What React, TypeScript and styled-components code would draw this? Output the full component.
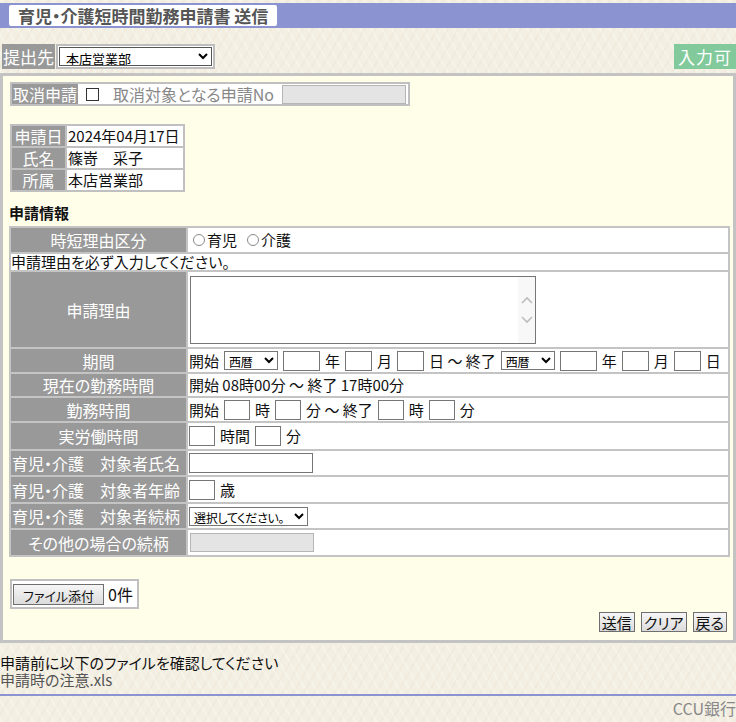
import styled, { createGlobalStyle } from 'styled-components';

const GlobalStyle = createGlobalStyle`
  body {
    margin: 0;
    background-color: #f4efe3;
    background-image:
      repeating-linear-gradient(60deg, rgba(255, 255, 255, 0.22) 0 2px, transparent 2px 9px),
      repeating-linear-gradient(-60deg, rgba(230, 222, 205, 0.25) 0 2px, transparent 2px 9px);
    font-family: "Noto Sans CJK JP", "Liberation Sans", sans-serif;
    font-size: 15px;
    color: #111;
    font-feature-settings: "palt";
  }
  input, select, textarea, button {
    font-family: inherit;
    font-feature-settings: "palt";
    box-sizing: border-box;
  }
`;

const TitleBar = styled.div`
  margin-top: 3px;
  height: 25px;
  padding: 2px 9px;
  box-sizing: border-box;
  background: #8b93d0;
`;

const Title = styled.h1`
  display: inline-block;
  margin: 0;
  height: 21px;
  padding: 0 9px;
  border-radius: 2px;
  background: #fff;
  color: #555;
  font-size: 17px;
  font-weight: bold;
  line-height: 21px;
`;

const DestRow = styled.div`
  display: flex;
  justify-content: space-between;
  align-items: center;
  margin-top: 16px;
  height: 25px;
`;

const DestLeft = styled.div`
  display: flex;
  align-items: stretch;
  height: 25px;
  margin-left: 2px;
`;

const DestLabel = styled.span`
  background: #999;
  color: #fff;
  font-size: 17px;
  line-height: 25px;
  padding: 0 1px;
`;

const DestSelectWrap = styled.span`
  display: flex;
  align-items: center;
  margin-left: 1px;
  padding: 1px;
  border: 2px solid #bdbdbd;
  background: #fff;
`;

const DestSelect = styled.select`
  width: 153px;
  height: 19px;
  font-size: 13px;
  border: 1px solid #555;
  background: #fff;
  padding: 0 2px;
`;

const Badge = styled.span`
  background: #82ca9c;
  color: #fff;
  font-size: 17px;
  line-height: 25px;
  padding: 0 4px;
  letter-spacing: 1px;
`;

const Panel = styled.div`
  margin-top: 4px;
  border: 3px solid #c3c3c3;
  background: #fffee9;
  padding: 6px 3px 8px 6px;
`;

const CancelBox = styled.div`
  display: inline-flex;
  align-items: center;
  margin-left: 1px;
  height: 24px;
  box-sizing: border-box;
  border: 2px solid #c0c0c0;
  background: #fff;
  padding-right: 2px;
`;

const CancelLabel = styled.span`
  align-self: stretch;
  background: #999;
  color: #fff;
  font-size: 16px;
  line-height: 20px;
  padding: 0 1px;
`;

const Check = styled.input`
  appearance: none;
  width: 13px;
  height: 13px;
  margin: 0 0 0 8px;
  border: 1px solid #333;
  background: #fff;
`;

const CancelText = styled.span`
  margin-left: 14px;
  color: #888;
  font-size: 16px;
`;

const DisabledInput = styled.input<{ $w: number }>`
  width: ${(p) => p.$w}px;
  height: 19px;
  margin-left: 8px;
  border: 1px solid #b5b5b5;
  background: #e4e4e4;
`;

const InfoTable = styled.table`
  margin: 18px 0 0 1px;
  border-spacing: 2px;
  background: #c0c0c0;
`;

const InfoHead = styled.th`
  width: 51px;
  height: 20px;
  padding: 0 1px;
  background: #999;
  color: #fff;
  font-size: 16px;
  font-weight: normal;
  text-align: center;
  line-height: 20px;
`;

const InfoCell = styled.td`
  width: 114px;
  padding: 0 1px;
  background: #fff;
  font-size: 15px;
  line-height: 20px;
  white-space: nowrap;
`;

const SectionTitle = styled.h2`
  margin: 12px 0 4px 0;
  font-size: 15px;
  font-weight: bold;
  line-height: 18px;
`;

const MainTable = styled.table`
  width: 721px;
  border-spacing: 2px;
  background: #c4c4c4;
`;

const Row = styled.tr<{ $h: number }>`
  height: ${(p) => p.$h}px;
`;

const Head = styled.th<{ $left?: boolean }>`
  width: 173px;
  padding: 0 1px;
  background: #999;
  color: #fff;
  font-size: 16px;
  font-weight: normal;
  text-align: ${(p) => (p.$left ? 'left' : 'center')};
  white-space: nowrap;
  line-height: 18px;
`;

const Cell = styled.td`
  padding: 0 1px;
  background: #fff;
  font-size: 15px;
  line-height: 18px;
  white-space: nowrap;
`;

const Notice = styled.td`
  padding: 0;
  background: #fff;
  font-size: 15px;
  line-height: 16px;
  white-space: nowrap;
`;

const Fields = styled.div<{ $gap?: number }>`
  display: flex;
  align-items: center;
  gap: ${(p) => p.$gap ?? 5}px;
`;

const RadioLabel = styled.label`
  display: inline-flex;
  align-items: center;
  margin-right: 6px;
`;

const Radio = styled.input`
  appearance: none;
  width: 12px;
  height: 12px;
  margin: 0 2px 0 4px;
  border: 1px solid #8a8a8a;
  border-radius: 50%;
  background: #fff;
`;

const Box = styled.input<{ $w: number }>`
  width: ${(p) => p.$w}px;
  height: 20px;
  border: 1px solid #767676;
  background: #fff;
`;

const SmallSelect = styled.select<{ $w: number }>`
  width: ${(p) => p.$w}px;
  height: 19px;
  font-size: 12px;
  letter-spacing: -0.3px;
  border: 1px solid #767676;
  background: #fff;
  padding: 0;
`;

const AreaWrap = styled.div`
  display: flex;
  width: 346px;
  height: 68px;
  margin: 3px 0 3px 1px;
  box-sizing: border-box;
  border: 1px solid #767676;
  background: #fff;
`;

const Area = styled.textarea`
  flex: 1;
  border: 0;
  resize: none;
  outline: none;
`;

const ScrollTrack = styled.div`
  width: 17px;
  background: #f8f8f8;
  display: flex;
  flex-direction: column;
  justify-content: center;
  align-items: center;
  gap: 12px;
`;

const FileBox = styled.div`
  display: inline-flex;
  align-items: center;
  margin: 22px 0 0 1px;
  padding: 1px;
  border: 2px solid #c0c0c0;
  background: #fff;
`;

const SmallButton = styled.button<{ $w?: number }>`
  height: 21px;
  ${(p) => (p.$w ? `width: ${p.$w}px;` : 'padding: 0 3px;')}
  border: 1px solid #6f6f6f;
  background: linear-gradient(#f6f6f6, #dcdcdc);
  color: #111;
  font-size: 13px;
  line-height: 19px;
`;

const FileCount = styled.span`
  margin: 0 3px 0 4px;
  font-size: 16px;
`;

const Actions = styled.div`
  display: flex;
  justify-content: flex-end;
  gap: 6px;
  margin: 3px 3px 0 0;
`;

const ActionButton = styled.button`
  height: 20px;
  padding: 0 2px;
  border: 1px solid #6f6f6f;
  background: linear-gradient(#f6f6f6, #dcdcdc);
  color: #111;
  font-size: 15px;
  line-height: 17px;
`;

const Footer = styled.div`
  margin-top: 11px;
  font-size: 15px;
  line-height: 17px;
`;

const FileLink = styled.div`
  color: #555;
`;

const Rule = styled.hr`
  margin: 6px 0 0 0;
  border: 0;
  height: 2px;
  background: #8b93d0;
`;

const Bank = styled.div`
  text-align: right;
  color: #888;
  font-size: 16px;
  line-height: 24px;
`;

const Chevron = ({ up }: { up?: boolean }) => (
  <svg width="12" height="8" viewBox="0 0 12 8">
    <path d={up ? 'M1 7 L6 2 L11 7' : 'M1 1 L6 6 L11 1'} fill="none" stroke="#bdbdbd" strokeWidth="1.6" />
  </svg>
);

const DateSelect = () => (
  <SmallSelect $w={54}>
    <option>西暦</option>
  </SmallSelect>
);

const App = () => {
  return (
    <>
      <GlobalStyle />
      <TitleBar>
        <Title>育児・介護短時間勤務申請書 送信</Title>
      </TitleBar>
      <DestRow>
        <DestLeft>
          <DestLabel>提出先</DestLabel>
          <DestSelectWrap>
            <DestSelect>
              <option>本店営業部</option>
            </DestSelect>
          </DestSelectWrap>
        </DestLeft>
        <Badge>入力可</Badge>
      </DestRow>

      <Panel>
        <CancelBox>
          <CancelLabel>取消申請</CancelLabel>
          <Check type="checkbox" />
          <CancelText>取消対象となる申請No</CancelText>
          <DisabledInput $w={124} disabled />
        </CancelBox>

        <InfoTable>
          <tbody>
            <tr>
              <InfoHead>申請日</InfoHead>
              <InfoCell>2024年04月17日</InfoCell>
            </tr>
            <tr>
              <InfoHead>氏名</InfoHead>
              <InfoCell>篠嵜　采子</InfoCell>
            </tr>
            <tr>
              <InfoHead>所属</InfoHead>
              <InfoCell>本店営業部</InfoCell>
            </tr>
          </tbody>
        </InfoTable>

        <SectionTitle>申請情報</SectionTitle>
        <MainTable>
          <tbody>
            <Row $h={24}>
              <Head>時短理由区分</Head>
              <Cell>
                <Fields $gap={0}>
                  <RadioLabel>
                    <Radio type="radio" name="reason" />育児
                  </RadioLabel>
                  <RadioLabel>
                    <Radio type="radio" name="reason" />介護
                  </RadioLabel>
                </Fields>
              </Cell>
            </Row>
            <Row $h={16}>
              <Notice colSpan={2}>申請理由を必ず入力してください。</Notice>
            </Row>
            <Row $h={75}>
              <Head>申請理由</Head>
              <Cell>
                <AreaWrap>
                  <Area />
                  <ScrollTrack>
                    <Chevron up />
                    <Chevron />
                  </ScrollTrack>
                </AreaWrap>
              </Cell>
            </Row>
            <Row $h={23}>
              <Head>期間</Head>
              <Cell>
                <Fields>
                  開始
                  <DateSelect />
                  <Box $w={37} />
                  <span>年</span>
                  <Box $w={27} />
                  <span>月</span>
                  <Box $w={27} />
                  <span>日 〜 終了</span>
                  <DateSelect />
                  <Box $w={37} />
                  <span>年</span>
                  <Box $w={27} />
                  <span>月</span>
                  <Box $w={27} />
                  <span>日</span>
                </Fields>
              </Cell>
            </Row>
            <Row $h={22}>
              <Head>現在の勤務時間</Head>
              <Cell>開始 08時00分 〜 終了 17時00分</Cell>
            </Row>
            <Row $h={23}>
              <Head>勤務時間</Head>
              <Cell>
                <Fields>
                  開始
                  <Box $w={26} />
                  <span>時</span>
                  <Box $w={26} />
                  <span>分 〜 終了</span>
                  <Box $w={26} />
                  <span>時</span>
                  <Box $w={26} />
                  <span>分</span>
                </Fields>
              </Cell>
            </Row>
            <Row $h={26}>
              <Head>実労働時間</Head>
              <Cell>
                <Fields>
                  <Box $w={26} />
                  <span>時間</span>
                  <Box $w={26} />
                  <span>分</span>
                </Fields>
              </Cell>
            </Row>
            <Row $h={24}>
              <Head $left>育児・介護　対象者氏名</Head>
              <Cell>
                <Box $w={124} />
              </Cell>
            </Row>
            <Row $h={25}>
              <Head $left>育児・介護　対象者年齢</Head>
              <Cell>
                <Fields>
                  <Box $w={26} />
                  <span>歳</span>
                </Fields>
              </Cell>
            </Row>
            <Row $h={24}>
              <Head $left>育児・介護　対象者続柄</Head>
              <Cell>
                <SmallSelect $w={119}>
                  <option>選択してください。</option>
                </SmallSelect>
              </Cell>
            </Row>
            <Row $h={25}>
              <Head>その他の場合の続柄</Head>
              <Cell>
                <DisabledInput $w={124} style={{ marginLeft: 1 }} disabled />
              </Cell>
            </Row>
          </tbody>
        </MainTable>

        <FileBox>
          <SmallButton $w={91}>ファイル添付</SmallButton>
          <FileCount>0件</FileCount>
        </FileBox>

        <Actions>
          <ActionButton>送信</ActionButton>
          <ActionButton>クリア</ActionButton>
          <ActionButton>戻る</ActionButton>
        </Actions>
      </Panel>

      <Footer>
        <div>申請前に以下のファイルを確認してください</div>
        <FileLink>申請時の注意.xls</FileLink>
      </Footer>
      <Rule />
      <Bank>CCU銀行</Bank>
    </>
  );
};

export default App;
